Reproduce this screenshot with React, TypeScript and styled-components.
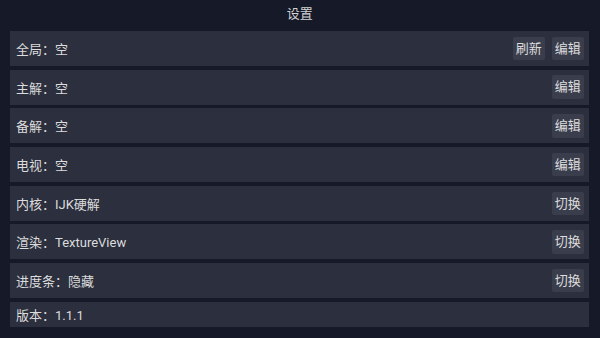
import React from 'react'
import styled, { createGlobalStyle } from 'styled-components'

const GlobalStyle = createGlobalStyle`
  html, body {
    margin: 0;
    padding: 0;
    background: #161a28;
  }
  body {
    font-family: Roboto, "Noto Sans CJK SC", sans-serif;
    color: #dcdcdc;
  }
`

const Page = styled.div`
  width: 600px;
  height: 338px;
  box-sizing: border-box;
  padding: 0 10.7px 0 10px;
  background: #161a28;
  overflow: hidden;
`

const Title = styled.div`
  height: 27px;
  margin-bottom: 4px;
  line-height: 27px;
  text-align: center;
  font-size: 13px;
  color: #d2d2d2;
`

const List = styled.div`
  display: flex;
  flex-direction: column;
  gap: 3.7px;
`

const Row = styled.div<{ $short?: boolean }>`
  display: flex;
  align-items: center;
  height: ${(p) => (p.$short ? '25px' : '35px')};
  padding: 0 5.6px 0 6px;
  background: #2b2f3e;
  font-size: 13px;
`

const Label = styled.span`
  flex: 1;
  white-space: nowrap;
`

const Actions = styled.div`
  display: flex;
  gap: 7px;
`

const Button = styled.button`
  height: 23.5px;
  padding: 0 3px;
  border: 0;
  border-radius: 2px;
  background: #3a3e4c;
  color: #dcdcdc;
  font-family: Roboto, "Noto Sans CJK SC", sans-serif;
  font-size: 13px;
  line-height: 23.5px;
`

interface Item {
  label: string
  actions?: string[]
}

const items: Item[] = [
  { label: '全局：空', actions: ['刷新', '编辑'] },
  { label: '主解：空', actions: ['编辑'] },
  { label: '备解：空', actions: ['编辑'] },
  { label: '电视：空', actions: ['编辑'] },
  { label: '内核：IJK硬解', actions: ['切换'] },
  { label: '渲染：TextureView', actions: ['切换'] },
  { label: '进度条：隐藏', actions: ['切换'] },
]

export default function App() {
  return (
    <>
      <GlobalStyle />
      <Page>
        <Title>设置</Title>
        <List>
          {items.map((it) => (
            <Row key={it.label}>
              <Label>{it.label}</Label>
              <Actions>
                {it.actions?.map((a) => (
                  <Button key={a}>{a}</Button>
                ))}
              </Actions>
            </Row>
          ))}
          <Row $short>
            <Label>版本：1.1.1</Label>
          </Row>
        </List>
      </Page>
    </>
  )
}
